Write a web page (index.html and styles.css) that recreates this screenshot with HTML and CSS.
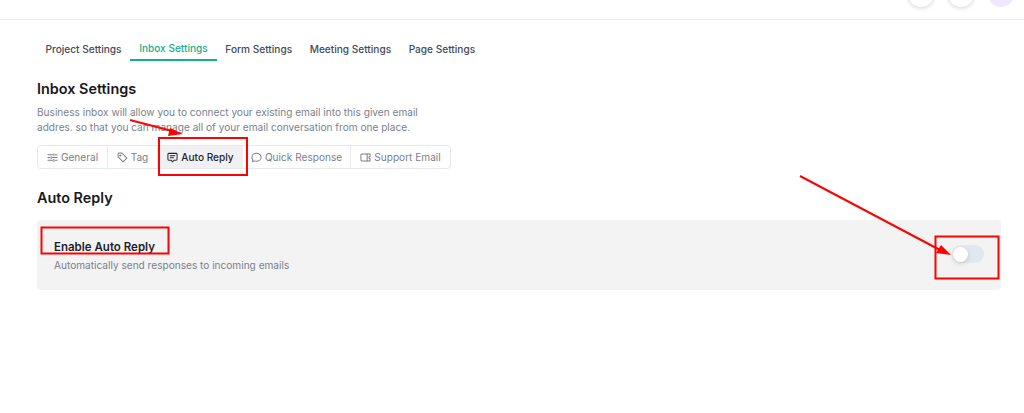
FILE: index.html
```html
<!DOCTYPE html>
<html lang="en">
<head>
<meta charset="utf-8">
<title>Inbox Settings</title>
<link rel="stylesheet" href="styles.css">
</head>
<body>
<header class="topbar">
  <span class="circle"></span>
  <span class="circle"></span>
  <span class="circle avatar"></span>
</header>
<main class="page">
  <nav class="tabs">
    <a class="tab">Project Settings</a>
    <a class="tab active">Inbox Settings</a>
    <a class="tab">Form Settings</a>
    <a class="tab">Meeting Settings</a>
    <a class="tab">Page Settings</a>
  </nav>
  <h2 class="title">Inbox Settings</h2>
  <p class="desc">Business inbox will allow you to connect your existing email into this given email addres. so that you can manage all of your email conversation from one place.</p>
  <div class="segments">
    <a class="seg seg-general">
      <svg class="ico" viewBox="0 0 12 12"><path d="M1 3h5M9 3h2M1 6h2M6 6h5M1 9h5M9 9h2"/><path d="M7.500 1.800v2.400M4.500 4.800v2.400M7.500 7.800v2.400"/></svg>General
    </a>
    <a class="seg seg-tag">
      <svg class="ico" viewBox="0 0 12 12"><path d="M1.200 1.800v3.600l5.400 5.400 4.200-4.200-5.400-5.400H1.800z"/><circle cx="3.600" cy="3.800" r=".6"/></svg>Tag
    </a>
    <a class="seg seg-auto current">
      <svg class="ico" viewBox="0 0 12 12"><path d="M2 1.500h8a1 1 0 0 1 1 1v5.500a1 1 0 0 1-1 1H7.500L6 10.800 4.500 9H2a1 1 0 0 1-1-1V2.500a1 1 0 0 1 1-1z"/><path d="M3.500 4.200h5M3.500 6.300h3.500"/></svg>Auto Reply
    </a>
    <a class="seg seg-quick">
      <svg class="ico" viewBox="0 0 12 12"><path d="M6 1.300c2.800 0 5 1.900 5 4.400s-2.200 4.400-5 4.400c-.8 0-1.500-.1-2.200-.4L1.500 10.600l.5-2.200C1.300 7.600 1 6.700 1 5.700c0-2.500 2.200-4.400 5-4.400z"/></svg>Quick Response
    </a>
    <a class="seg seg-support">
      <svg class="ico" viewBox="0 0 12 12"><path d="M2 2.300h9v2.400a1.300 1.300 0 0 0 0 2.600v2.400H2a1 1 0 0 1-1-1V3.300a1 1 0 0 1 1-1z"/><path d="M7.800 2.300v7.400"/></svg>Support Email
    </a>
  </div>
  <h2 class="title section">Auto Reply</h2>
  <section class="card">
    <div class="card-text">
      <h3 class="card-title">Enable Auto Reply</h3>
      <p class="card-sub">Automatically send responses to incoming emails</p>
    </div>
    <span class="toggle"><span class="knob"></span></span>
  </section>
</main>
<svg class="marks" viewBox="0 0 1024 413" aria-hidden="true">
  <g class="mark-box">
    <rect x="159" y="138" width="88" height="37"/>
    <rect x="41.500" y="227.500" width="127" height="26"/>
    <rect x="935.500" y="236.500" width="63" height="42"/>
  </g>
  <g class="mark-line">
    <path d="M130 120 172 131"/>
    <path d="M800 176 940 250"/>
  </g>
  <g class="mark-head">
    <path d="M183 134 168 136 170 128z"/>
    <path d="M951 255 936 253 941 245z"/>
  </g>
</svg>
</body>
</html>
```
FILE: styles.css
```css
* { box-sizing: border-box; }
html, body { margin: 0; height: 100%; overflow: hidden; }
body {
  position: relative;
  background: #fff;
  font-family: Inter, "Liberation Sans", sans-serif;
  color: #18181b;
}
.topbar {
  height: 20px;
  border-bottom: 1px solid #ececee;
  display: flex;
  justify-content: flex-end;
  gap: 14px;
  padding-right: 10px;
  overflow: hidden;
}
.circle {
  width: 26px;
  height: 26px;
  margin-top: -19px;
  border-radius: 50%;
  background: #fff;
  box-shadow: 0 1px 4px rgba(0, 0, 0, .18);
}
.avatar { background: #f0e6fd; box-shadow: none; }
.page { padding: 19px 23px 0 37px; }
.tabs { display: flex; height: 22px; margin-left: -.3px; }
.tab {
  padding: 2px 8.800px 0;
  font-size: 10.100px;
  font-weight: 500;
  line-height: 16px;
  color: #434a58;
}
.tab.active {
  color: #10b090;
  border-bottom: 2px solid #10b090;
  margin-top: -1px;
  height: 23px;
}
.title {
  margin: 18px 0 0;
  font-size: 14.400px;
  font-weight: 600;
  line-height: 20px;
  color: #18181b;
}
.desc {
  width: 400px;
  margin: 6px 0 0;
  font-size: 10.100px;
  line-height: 15px;
  color: #7b7f8c;
}
.segments {
  display: flex;
  width: 414px;
  height: 24px;
  margin-top: 10px;
  border: 1px solid #e8e9ec;
  border-radius: 4px;
  overflow: hidden;
}
.seg {
  display: flex;
  align-items: center;
  justify-content: center;
  gap: 3px;
  font-size: 10.100px;
  font-weight: 400;
  color: #7b7f8c;
  border-right: 1px solid #e8e9ec;
}
.seg:last-child { border-right: 0; }
.seg-general { width: 70px; }
.seg-tag { width: 50px; }
.seg-auto { width: 85px; }
.seg-quick { width: 108px; }
.seg-support { flex: 1; }
.seg.current { background: #f1f1f3; color: #23262e; font-weight: 500; border-right: 0; }
.ico {
  width: 11px;
  height: 11px;
  fill: none;
  stroke: currentColor;
  stroke-width: 1.100;
  stroke-linejoin: round;
  stroke-linecap: round;
}
.section { margin-top: 19px; }
.card {
  display: flex;
  justify-content: space-between;
  align-items: center;
  height: 70px;
  margin-top: 12px;
  padding: 0 17px;
  background: #f3f3f4;
  border-radius: 4px;
}
.card-text { padding-top: 2px; }
.card-title {
  margin: 0;
  font-size: 11.500px;
  font-weight: 600;
  line-height: 16px;
  color: #1f2128;
}
.card-sub {
  margin: 3px 0 0;
  font-size: 10.100px;
  line-height: 15px;
  color: #7b7f8c;
}
.toggle {
  display: block;
  width: 32px;
  height: 18px;
  margin-top: -2px;
  border-radius: 9px;
  background: #e1e6ef;
}
.knob {
  display: block;
  width: 15px;
  height: 15px;
  margin: 1.500px 0 0 1px;
  border-radius: 50%;
  background: #fff;
  box-shadow: 0 2px 5px rgba(0, 0, 0, .14);
}
.marks {
  position: absolute;
  left: 0;
  top: 0;
  width: 1024px;
  height: 413px;
  pointer-events: none;
}
.mark-box rect { fill: none; stroke: #fb0303; stroke-width: 2; }
.mark-line path { fill: none; stroke: #fb0303; stroke-width: 2; }
.mark-head path { fill: #fb0303; }
```
